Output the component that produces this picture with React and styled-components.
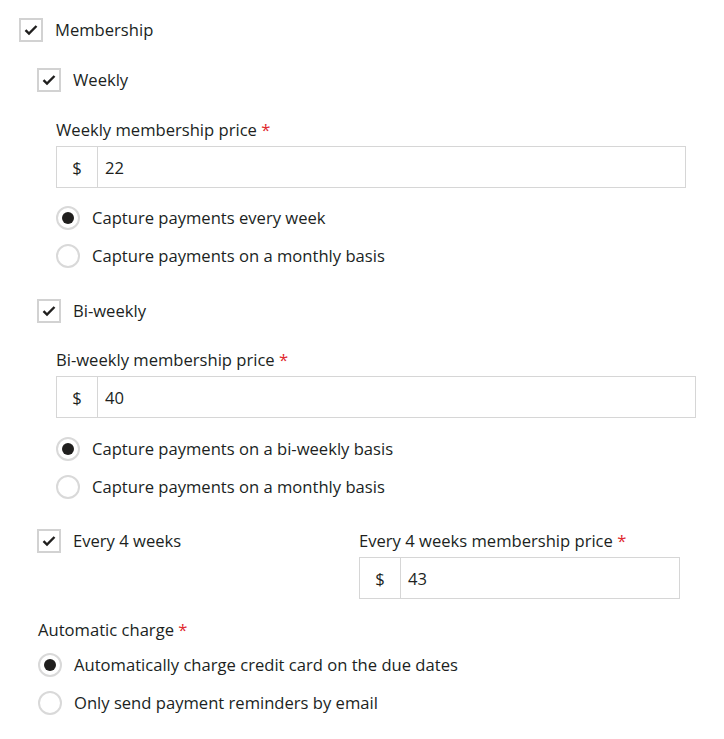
import styled, { createGlobalStyle } from "styled-components";

const GlobalStyle = createGlobalStyle`
  body {
    margin: 0;
    background: #ffffff;
    font-family: "Open Sans", "Noto Sans", sans-serif;
    color: #201f1e;
  }
`;

export default function App() {
  return (
    <>
      <GlobalStyle />
      <Form>
        <Checkbox label="Membership" />

        <Section $indent={18} $top={26}>
          <Checkbox label="Weekly" />
          <Section $indent={19} $top={27}>
            <PriceField label="Weekly membership price" value="22" width={630} />
            <RadioGroup $top={18}>
              <Radio checked label="Capture payments every week" />
              <Radio label="Capture payments on a monthly basis" />
            </RadioGroup>
          </Section>

          <Section $top={31}>
            <Checkbox label="Bi-weekly" />
          </Section>
          <Section $indent={19} $top={26}>
            <PriceField label="Bi-weekly membership price" value="40" width={640} />
            <RadioGroup $top={19}>
              <Radio checked label="Capture payments on a bi-weekly basis" />
              <Radio label="Capture payments on a monthly basis" />
            </RadioGroup>
          </Section>

          <SplitRow $top={30}>
            <LeftCol>
              <Checkbox label="Every 4 weeks" />
            </LeftCol>
            <RightCol>
              <PriceField label="Every 4 weeks membership price" value="43" width={321} />
            </RightCol>
          </SplitRow>
        </Section>

        <Section $indent={19} $top={20}>
          <FieldLabel>
            Automatic charge <Req>*</Req>
          </FieldLabel>
          <RadioGroup $top={12}>
            <Radio checked label="Automatically charge credit card on the due dates" />
            <Radio label="Only send payment reminders by email" />
          </RadioGroup>
        </Section>
      </Form>
    </>
  );
}

function Checkbox({ label }) {
  return (
    <CheckRow>
      <Box>
        <svg width="14" height="12" viewBox="0 0 14 12">
          <path d="M1.5 6.2 L5 9.6 L12.5 2" fill="none" stroke="#201f1e" strokeWidth="2.4" />
        </svg>
      </Box>
      <Text>{label}</Text>
    </CheckRow>
  );
}

function Radio({ checked, label }) {
  return (
    <CheckRow>
      <Circle>{checked && <Dot />}</Circle>
      <Text>{label}</Text>
    </CheckRow>
  );
}

function PriceField({ label, value, width }) {
  return (
    <div>
      <FieldLabel>
        {label} <Req>*</Req>
      </FieldLabel>
      <InputGroup style={{ width }}>
        <Prefix>$</Prefix>
        <Value>{value}</Value>
      </InputGroup>
    </div>
  );
}

const Form = styled.div`
  padding: 18px 0 24px 19px;
  font-size: 16.6px;
`;

const Section = styled.div`
  margin-left: ${(p) => p.$indent || 0}px;
  margin-top: ${(p) => p.$top || 0}px;
`;

const SplitRow = styled.div`
  display: flex;
  align-items: flex-start;
  margin-top: ${(p) => p.$top}px;
`;

const LeftCol = styled.div`
  width: 322px;
  flex-shrink: 0;
`;

const RightCol = styled.div`
  width: 321px;
  margin-top: 1px;
`;

const CheckRow = styled.div`
  display: flex;
  align-items: center;
  gap: 12px;
  height: 24px;
`;

const Box = styled.div`
  box-sizing: border-box;
  width: 24px;
  height: 24px;
  border: 2px solid #d2d2d2;
  display: flex;
  align-items: center;
  justify-content: center;
  flex-shrink: 0;
`;

const Circle = styled.div`
  box-sizing: border-box;
  width: 24px;
  height: 24px;
  border: 2px solid #d9d9d9;
  border-radius: 50%;
  display: flex;
  align-items: center;
  justify-content: center;
  flex-shrink: 0;
`;

const Dot = styled.div`
  width: 12px;
  height: 12px;
  border-radius: 50%;
  background: #201f1e;
`;

const Text = styled.span`
  font-size: 16.6px;
  line-height: 22px;
  white-space: nowrap;
`;

const FieldLabel = styled.div`
  font-size: 16.6px;
  line-height: 22px;
  margin-bottom: 5px;
  white-space: nowrap;
`;

const Req = styled.span`
  color: #e0282e;
`;

const RadioGroup = styled.div`
  display: flex;
  flex-direction: column;
  gap: 14px;
  margin-top: ${(p) => p.$top}px;
`;

const InputGroup = styled.div`
  box-sizing: border-box;
  display: flex;
  height: 42px;
  border: 1px solid #d6d6d6;
`;

const Prefix = styled.div`
  width: 40px;
  border-right: 1px solid #d6d6d6;
  display: flex;
  align-items: center;
  justify-content: center;
  font-size: 16.6px;
`;

const Value = styled.div`
  display: flex;
  align-items: center;
  padding-left: 7px;
  font-size: 16.6px;
`;
